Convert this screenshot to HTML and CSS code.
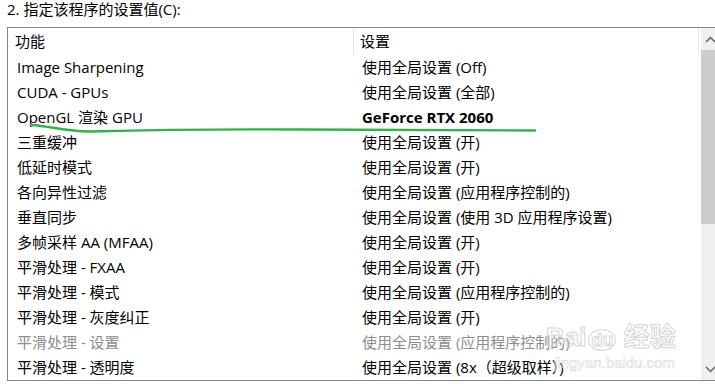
FILE: index.html
```html
<!DOCTYPE html>
<html lang="zh-CN">
<head>
<meta charset="utf-8">
<link rel="stylesheet" href="styles.css">
</head>
<body>
<div class="title">2. 指定该程序的设置值(C):</div>
<div class="box">
  <div class="list">
    <div class="hdr"><div class="h1">功能</div><div class="h2">设置</div></div>
    <div class="row"><span class="c1">Image Sharpening</span><span class="c2">使用全局设置 (Off)</span></div>
    <div class="row"><span class="c1">CUDA - GPUs</span><span class="c2">使用全局设置 (全部)</span></div>
    <div class="row"><span class="c1">OpenGL 渲染 GPU</span><span class="c2 bold">GeForce RTX 2060</span></div>
    <div class="row"><span class="c1">三重缓冲</span><span class="c2">使用全局设置 (开)</span></div>
    <div class="row"><span class="c1">低延时模式</span><span class="c2">使用全局设置 (开)</span></div>
    <div class="row"><span class="c1">各向异性过滤</span><span class="c2">使用全局设置 (应用程序控制的)</span></div>
    <div class="row"><span class="c1">垂直同步</span><span class="c2">使用全局设置 (使用 3D 应用程序设置)</span></div>
    <div class="row"><span class="c1">多帧采样 AA (MFAA)</span><span class="c2">使用全局设置 (开)</span></div>
    <div class="row"><span class="c1">平滑处理 - FXAA</span><span class="c2">使用全局设置 (开)</span></div>
    <div class="row"><span class="c1">平滑处理 - 模式</span><span class="c2">使用全局设置 (应用程序控制的)</span></div>
    <div class="row"><span class="c1">平滑处理 - 灰度纠正</span><span class="c2">使用全局设置 (开)</span></div>
    <div class="row disabled"><span class="c1">平滑处理 - 设置</span><span class="c2">使用全局设置 (应用程序控制的)</span></div>
    <div class="row"><span class="c1">平滑处理 - 透明度</span><span class="c2">使用全局设置 (8x（超级取样）)</span></div>
  </div>
  <div class="sb">
    <div class="btn"><svg width="11" height="7" viewBox="0 0 11 7"><path d="M1 6 L5.5 1.5 L10 6" fill="none" stroke="#606060" stroke-width="1.5"/></svg></div>
    <div class="thumb"></div>
    <div class="track"></div>
    <div class="btn"><svg width="11" height="7" viewBox="0 0 11 7"><path d="M1 1 L5.5 5.5 L10 1" fill="none" stroke="#606060" stroke-width="1.5"/></svg></div>
  </div>
  <div class="wm">
    <div class="wm-logo">Bai<span class="wm-du">du</span> 经验</div>
    <div class="wm-url">jingyan.baidu.com</div>
  </div>
</div>
<svg class="ink" width="715" height="389" viewBox="0 0 715 389"><path d="M31 125 C50 126 68 132 90 131.5 C130 130.5 200 129 300 129.5 L535 130.5" fill="none" stroke="#2fb14b" stroke-width="2.4" stroke-linecap="round"/></svg>
</body>
</html>
```
FILE: styles.css
```css
html, body {
  margin: 0;
  padding: 0;
  overflow: hidden;
  background: #fff;
}
body {
  width: 715px;
  height: 389px;
  position: relative;
  font-family: "Open Sans", "Noto Sans CJK SC", sans-serif;
  font-size: 15px;
  color: #000;
}
.title {
  height: 27px;
  padding-left: 7px;
  line-height: 18px;
  white-space: nowrap;
}
.box {
  position: relative;
  margin-left: 7px;
  width: 712px;
  height: 352px;
  border: 1px solid #828790;
  display: flex;
}
.list {
  width: 693px;
  flex: none;
}
.hdr {
  display: grid;
  grid-template-columns: 346px 345px;
  height: 27px;
}
.h1, .h2 {
  line-height: 27px;
  border-right: 1px solid #e5e5e5;
  white-space: nowrap;
}
.h1 { padding-left: 7px; }
.h2 { padding-left: 6px; }
.row {
  display: grid;
  grid-template-columns: 346px 1fr;
  height: 25px;
  line-height: 25px;
  white-space: nowrap;
}
.c1 { padding-left: 9px; }
.c2 { padding-left: 8px; }
.bold { font-weight: 700; }
.disabled { color: #8d8d8d; }
.sb {
  width: 18px;
  flex: none;
  display: flex;
  flex-direction: column;
  background: #f0f0f0;
}
.btn {
  height: 22px;
  display: flex;
  align-items: center;
  justify-content: center;
}
.thumb {
  height: 174px;
  background: #cdcdcd;
}
.track { flex: 1; }
.wm {
  position: absolute;
  left: 538px;
  top: 294px;
  color: transparent;
  -webkit-text-stroke: 1px #d6d6d6;
  pointer-events: none;
}
.wm-logo {
  font-family: "Liberation Sans", "Noto Sans CJK SC", sans-serif;
  font-size: 26px;
  font-weight: 700;
  line-height: 30px;
  white-space: nowrap;
}
.wm-du {
  font-size: 18px;
  border: 1px solid #d6d6d6;
  border-radius: 50%;
  padding: 0 2px;
  margin-left: 2px;
}
.wm-url {
  font-family: "Liberation Sans", sans-serif;
  font-size: 15px;
  line-height: 16px;
  -webkit-text-stroke: 0.6px #dcdcdc;
  margin-left: 8px;
}
.ink {
  position: absolute;
  left: 0;
  top: 0;
  pointer-events: none;
}
```
